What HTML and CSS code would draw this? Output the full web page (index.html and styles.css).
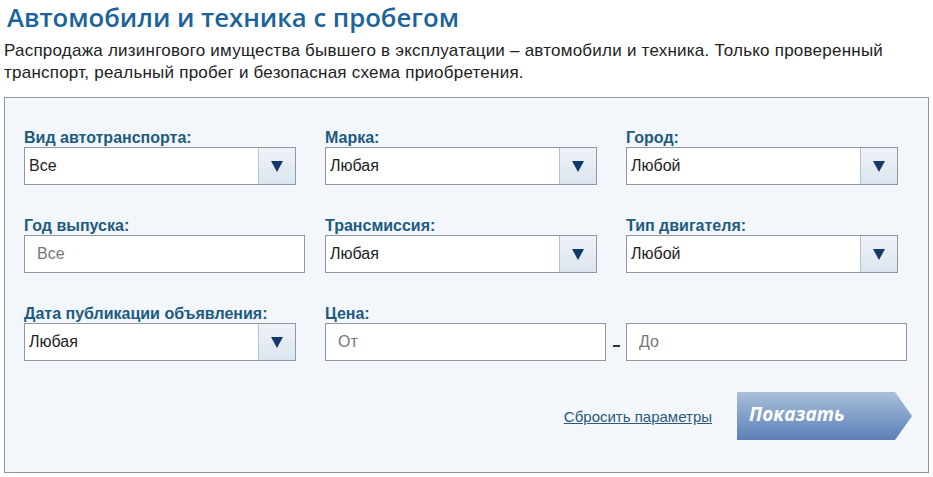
FILE: index.html
```html
<!DOCTYPE html>
<html lang="ru">
<head>
  <meta charset="UTF-8" />
  <meta name="viewport" content="width=device-width, initial-scale=1.0"/>
  <title>Автомобили и техника с пробегом</title>
  <link rel="stylesheet" href="styles.css">
</head>
<body>

  <div class="pagina">
    <h1 class="titulo">Автомобили и техника с пробегом</h1>
    <p class="descricao">Распродажа лизингового имущества бывшего в эксплуатации – автомобили и техника. Только проверенный транспорт, реальный пробег и безопасная схема приобретения.</p>

    <form class="filtro">
      <div class="grade">
        <div class="campo">
          <label>Вид автотранспорта:</label>
          <div class="seletor"><span>Все</span><i class="seta"></i></div>
        </div>
        <div class="campo">
          <label>Марка:</label>
          <div class="seletor"><span>Любая</span><i class="seta"></i></div>
        </div>
        <div class="campo">
          <label>Город:</label>
          <div class="seletor"><span>Любой</span><i class="seta"></i></div>
        </div>

        <div class="campo">
          <label>Год выпуска:</label>
          <input type="text" placeholder="Все">
        </div>
        <div class="campo">
          <label>Трансмиссия:</label>
          <div class="seletor"><span>Любая</span><i class="seta"></i></div>
        </div>
        <div class="campo">
          <label>Тип двигателя:</label>
          <div class="seletor"><span>Любой</span><i class="seta"></i></div>
        </div>

        <div class="campo">
          <label>Дата публикации объявления:</label>
          <div class="seletor"><span>Любая</span><i class="seta"></i></div>
        </div>
        <div class="campo preco">
          <label>Цена:</label>
          <div class="faixa">
            <input type="text" placeholder="От">
            <span class="traco"></span>
            <input type="text" placeholder="До">
          </div>
        </div>
      </div>

      <div class="acoes">
        <a href="#" class="limpar">Сбросить параметры</a>
        <button type="button" class="mostrar">Показать</button>
      </div>
    </form>
  </div>

</body>
</html>
```

FILE: styles.css
```css
body {
  font-family: 'Liberation Sans', Arial, sans-serif;
  background-color: #fff;
  color: #222;
  margin: 0;
  padding: 0;
}

.pagina {
  width: 925px;
  padding: 0 4px;
}

.titulo {
  font-family: 'Open Sans', sans-serif;
  font-weight: 600;
  font-size: 25.7px;
  line-height: 35px;
  color: #1b639c;
  margin: 0 0 0 3px;
}

.descricao {
  font-size: 17px;
  letter-spacing: 0.23px;
  line-height: 22px;
  margin: 5px 0 13px;
}

.filtro {
  border: 1px solid #8b98a4;
  background-color: #f3f6fa;
  padding: 31px 19px 32px 19px;
}

.grade {
  display: grid;
  grid-template-columns: 281px 281px 281px;
  column-gap: 20px;
  row-gap: 32px;
}

.campo {
  display: flex;
  flex-direction: column;
}

.campo label {
  font-size: 16px;
  font-weight: bold;
  line-height: 18px;
  color: #1d5b80;
}

.seletor {
  width: 270px;
  height: 36px;
  border: 1px solid #8d9aa6;
  background-color: #fff;
  display: flex;
  align-items: center;
  justify-content: space-between;
  font-size: 16px;
}

.seletor span {
  padding-left: 4px;
}

.seta {
  width: 36px;
  height: 36px;
  border-left: 1px solid #b5c1cc;
  background: linear-gradient(#eef3f8, #dce5ee);
  position: relative;
}

.seta::after {
  content: "";
  position: absolute;
  left: 12px;
  top: 13px;
  border-left: 6px solid transparent;
  border-right: 6px solid transparent;
  border-top: 11px solid #14396b;
}

input {
  width: 281px;
  height: 38px;
  box-sizing: border-box;
  border: 1px solid #8d9aa6;
  background-color: #fff;
  padding: 0 12px;
  font-family: 'Liberation Sans', Arial, sans-serif;
  font-size: 16px;
  color: #222;
  outline: none;
}

input::placeholder {
  color: #777;
}

.preco {
  grid-column: span 2;
}

.faixa {
  display: flex;
  align-items: center;
}

.traco {
  width: 7px;
  height: 2px;
  background-color: #333;
  margin: 7px 6px 0 7px;
}

.acoes {
  display: flex;
  justify-content: flex-end;
  align-items: center;
  gap: 25px;
  margin-top: 31px;
}

.limpar {
  font-size: 15px;
  color: #2a5a78;
  text-decoration: underline;
}

.mostrar {
  width: 175px;
  height: 48px;
  border: none;
  background: linear-gradient(#a9bfdc, #5b80b6);
  clip-path: polygon(0 0, 158px 0, 175px 24px, 158px 48px, 0 48px);
  color: #fff;
  font-family: 'Open Sans', sans-serif;
  font-size: 19px;
  font-weight: bold;
  font-style: italic;
  text-align: left;
  padding: 0 0 4px 12px;
  cursor: pointer;
  margin-right: -3px;
}
```
